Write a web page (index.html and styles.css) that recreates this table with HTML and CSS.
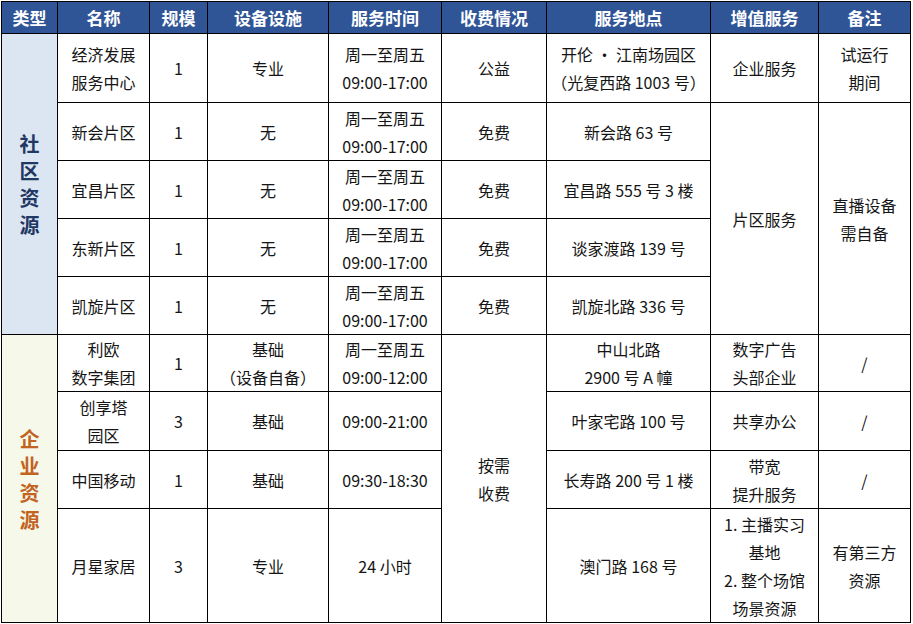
FILE: index.html
```html
<!DOCTYPE html>
<html lang="zh-CN">
<head>
<meta charset="utf-8">
<title>资源表</title>
<link rel="stylesheet" href="styles.css">
</head>
<body>
<table class="grid">
  <colgroup>
    <col class="c1"><col class="c2"><col class="c3"><col class="c4"><col class="c5">
    <col class="c6"><col class="c7"><col class="c8"><col class="c9">
  </colgroup>
  <thead>
    <tr class="r-head">
      <th>类型</th><th>名称</th><th>规模</th><th>设备设施</th><th>服务时间</th>
      <th>收费情况</th><th>服务地点</th><th>增值服务</th><th>备注</th>
    </tr>
  </thead>
  <tbody>
    <tr class="r-69">
      <td rowspan="5" class="type type-community">社<br>区<br>资<br>源</td>
      <td>经济发展<br>服务中心</td><td>1</td><td>专业</td><td>周一至周五<br>09:00-17:00</td>
      <td>公益</td><td>开伦 · 江南场园区<br>（光复西路 1003 号）</td><td>企业服务</td><td>试运行<br>期间</td>
    </tr>
    <tr class="r-58">
      <td>新会片区</td><td>1</td><td>无</td><td>周一至周五<br>09:00-17:00</td>
      <td>免费</td><td>新会路 63 号</td>
      <td rowspan="4">片区服务</td><td rowspan="4">直播设备<br>需自备</td>
    </tr>
    <tr class="r-58">
      <td>宜昌片区</td><td>1</td><td>无</td><td>周一至周五<br>09:00-17:00</td>
      <td>免费</td><td>宜昌路 555 号 3 楼</td>
    </tr>
    <tr class="r-58">
      <td>东新片区</td><td>1</td><td>无</td><td>周一至周五<br>09:00-17:00</td>
      <td>免费</td><td>谈家渡路 139 号</td>
    </tr>
    <tr class="r-58">
      <td>凯旋片区</td><td>1</td><td>无</td><td>周一至周五<br>09:00-17:00</td>
      <td>免费</td><td>凯旋北路 336 号</td>
    </tr>
    <tr class="r-57">
      <td rowspan="4" class="type type-enterprise">企<br>业<br>资<br>源</td>
      <td>利欧<br>数字集团</td><td>1</td><td>基础<br>（设备自备）</td><td>周一至周五<br>09:00-12:00</td>
      <td rowspan="4">按需<br>收费</td><td>中山北路<br>2900 号 A 幢</td><td>数字广告<br>头部企业</td><td>/</td>
    </tr>
    <tr class="r-59">
      <td>创享塔<br>园区</td><td>3</td><td>基础</td><td>09:00-21:00</td>
      <td>叶家宅路 100 号</td><td>共享办公</td><td>/</td>
    </tr>
    <tr class="r-58">
      <td>中国移动</td><td>1</td><td>基础</td><td>09:30-18:30</td>
      <td>长寿路 200 号 1 楼</td><td>带宽<br>提升服务</td><td>/</td>
    </tr>
    <tr class="r-114">
      <td>月星家居</td><td>3</td><td>专业</td><td>24 小时</td>
      <td>澳门路 168 号</td><td>1. 主播实习<br>基地<br>2. 整个场馆<br>场景资源</td><td>有第三方<br>资源</td>
    </tr>
  </tbody>
</table>
</body>
</html>
```
FILE: styles.css
```css
html, body {
  margin: 0;
  padding: 0;
  background: #ffffff;
}
body {
  padding: 1px 0 0 1px;
  font-family: "Noto Sans CJK SC", "Noto Sans", sans-serif;
  font-size: 16px;
  color: #151515;
}
.grid {
  border-collapse: collapse;
  table-layout: fixed;
  width: 910px;
}
.c1 { width: 56px; }
.c2 { width: 92px; }
.c3 { width: 58px; }
.c4 { width: 121px; }
.c5 { width: 113px; }
.c6 { width: 105px; }
.c7 { width: 164px; }
.c8 { width: 108px; }
.c9 { width: 92px; }
.grid th, .grid td {
  border: 1px solid #000;
  padding: 0;
  text-align: center;
  vertical-align: middle;
  line-height: 28px;
  white-space: nowrap;
}
.grid th {
  background: #2f5597;
  color: #ffffff;
  font-size: 17px;
  font-weight: 700;
  height: 31px;
  line-height: 20px;
}
.r-69 td { height: 68px; }
.r-58 td { height: 57px; }
.r-57 td { height: 56px; }
.r-59 td { height: 58px; }
.r-114 td { height: 113px; }
.grid td.type {
  font-size: 20px;
  font-weight: 700;
  line-height: 27px;
}
.type-community {
  background: #dce6f2;
  color: #1f3864;
}
.type-enterprise {
  background: #f6f8ea;
  color: #c2631f;
}
```
